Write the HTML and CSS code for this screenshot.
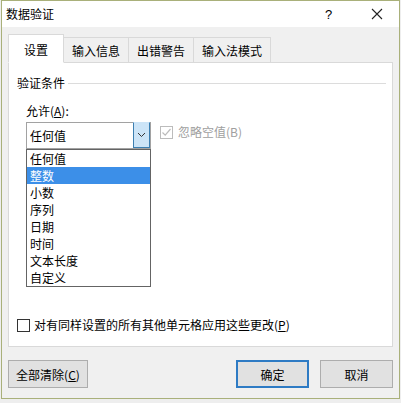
FILE: index.html
```html
<!DOCTYPE html>
<html lang="zh-CN">
<head>
<meta charset="utf-8">
<title>数据验证</title>
<link rel="stylesheet" href="styles.css">
</head>
<body>
<div class="dialog">
  <div class="titlebar">
    <span class="title">数据验证</span>
    <span class="help">?</span>
    <span class="close">
      <svg width="12" height="12" viewBox="0 0 12 12"><path d="M1 1L11 11M11 1L1 11" stroke="#222" stroke-width="1.1" fill="none"/></svg>
    </span>
  </div>
  <div class="body">
    <div class="tabs">
      <div class="tab active">设置</div>
      <div class="tab">输入信息</div>
      <div class="tab">出错警告</div>
      <div class="tab">输入法模式</div>
    </div>
    <div class="panel">
      <div class="group-title"><span>验证条件</span><span class="rule"></span></div>
      <div class="allow">
        <div class="allow-label">允许(<u>A</u>):</div>
        <div class="allow-row">
          <div class="combo">
            <span class="combo-value">任何值</span>
            <span class="combo-btn">
              <svg width="9" height="6" viewBox="0 0 9 6"><path d="M1 1L4.5 4.5L8 1" stroke="#333" stroke-width="1" fill="none"/></svg>
            </span>
            <ul class="dropdown">
              <li>任何值</li>
              <li class="selected">整数</li>
              <li>小数</li>
              <li>序列</li>
              <li>日期</li>
              <li>时间</li>
              <li>文本长度</li>
              <li>自定义</li>
            </ul>
          </div>
          <div class="check disabled">
            <span class="box">
              <svg width="11" height="11" viewBox="0 0 11 11"><path d="M1.5 5.5L4.2 8.2L9.5 2" stroke="#bcbcbc" stroke-width="1.2" fill="none"/></svg>
            </span>
            <span class="check-label">忽略空值(B)</span>
          </div>
        </div>
      </div>
      <div class="check apply">
        <span class="box"></span>
        <span class="check-label">对有同样设置的所有其他单元格应用这些更改(<u>P</u>)</span>
      </div>
    </div>
    <div class="buttons">
      <button class="btn clear">全部清除(<u>C</u>)</button>
      <button class="btn ok">确定</button>
      <button class="btn cancel">取消</button>
    </div>
  </div>
</div>
</body>
</html>
```

FILE: styles.css
```css
html, body {
  margin: 0;
  padding: 0;
  background: #eeeeee;
}
body {
  width: 401px;
  height: 403px;
  overflow: hidden;
  font-family: "Noto Sans CJK SC", "Microsoft YaHei", sans-serif;
  font-size: 12px;
  color: #000;
}
.dialog {
  width: 397px;
  height: 397px;
  border: 1px solid #a9b07a;
  margin-left: 1px;
  background: #f0f0f0;
  display: flex;
  flex-direction: column;
}
.titlebar {
  height: 26px;
  background: #fff;
  display: flex;
  align-items: center;
  padding-left: 4px;
}
.title {
  flex: 1;
  font-size: 12px;
  line-height: 16px;
  padding-bottom: 1px;
}
.help {
  font-family: "Liberation Sans", sans-serif;
  font-size: 13px;
  width: 12px;
  margin-right: 34px;
}
.close {
  display: flex;
  width: 12px;
  height: 12px;
  margin-right: 16px;
}
.body {
  flex: 1;
  padding: 8px 6px 0 6px;
  display: flex;
  flex-direction: column;
}
.tabs {
  display: flex;
  align-items: flex-end;
  height: 28px;
  position: relative;
  z-index: 1;
  margin-bottom: -1px;
}
.tab {
  height: 24px;
  line-height: 24px;
  padding: 0 8px;
  border: 1px solid #d9d9d9;
  border-bottom: 1px solid #d9d9d9;
  border-left: none;
  background: #f0f0f0;
  box-sizing: border-box;
  height: 26px;
  line-height: 25px;
}
.tab.active {
  height: 29px;
  line-height: 30px;
  padding: 0 15px;
  background: #fff;
  border-left: 1px solid #d9d9d9;
  border-bottom: 1px solid #fff;
}
.panel {
  height: 283px;
  background: #fff;
  border: 1px solid #d9d9d9;
  padding: 12px 6px 13px 8px;
  box-sizing: border-box;
  height: 285px;
  display: flex;
  flex-direction: column;
}
.group-title {
  display: flex;
  align-items: center;
  height: 16px;
  line-height: 16px;
}
.group-title .rule {
  flex: 1;
  height: 1px;
  background: #dcdcdc;
  margin-left: 3px;
}
.allow {
  margin-left: 9px;
  margin-top: 12px;
}
.allow-label {
  height: 16px;
  line-height: 16px;
}
.allow-row {
  margin-top: 3px;
  display: flex;
  align-items: flex-start;
}
.combo {
  position: relative;
  width: 125px;
  height: 27px;
  box-sizing: border-box;
  border: 1px solid #a2a2a2;
  display: flex;
  align-items: center;
  padding-left: 3px;
}
.combo-value {
  flex: 1;
  line-height: 16px;
}
.combo-btn {
  width: 17px;
  height: 26px;
  box-sizing: border-box;
  border: 1px solid #3c7fb1;
  border-top-color: #cce4f7;
  background: #cce4f7;
  display: flex;
  align-items: center;
  justify-content: center;
  margin-right: 0;
  align-self: flex-end;
}
.dropdown {
  position: absolute;
  left: -1px;
  top: 26px;
  width: 125px;
  box-sizing: border-box;
  margin: 0;
  padding: 0;
  list-style: none;
  border: 1px solid #646464;
  background: #fff;
}
.dropdown li {
  height: 17px;
  line-height: 17px;
  padding-left: 3px;
}
.dropdown li.selected {
  background: #3c8fe8;
  color: #fff;
}
.check {
  display: flex;
  align-items: center;
}
.check .box {
  width: 13px;
  height: 13px;
  box-sizing: border-box;
  border: 1px solid #333;
  background: #fff;
  display: flex;
  align-items: center;
  justify-content: center;
}
.check-label {
  margin-left: 5px;
  line-height: 16px;
}
.check.disabled {
  margin-left: 9px;
  margin-top: 2px;
  height: 16px;
}
.check.disabled .box {
  border-color: #bcbcbc;
}
.check.disabled .check-label {
  color: #a0a0a0;
}
.apply {
  margin-top: auto;
  height: 16px;
}
.apply .check-label {
  margin-left: 4px;
}
.buttons {
  display: flex;
  margin-top: 13px;
}
.btn {
  height: 28px;
  box-sizing: border-box;
  background: #e1e1e1;
  border: 1px solid #adadad;
  font-family: inherit;
  font-size: 12px;
  color: #000;
  padding: 0;
}
.btn.clear {
  width: 80px;
}
.btn.ok {
  width: 73px;
  margin-left: auto;
  border: 2px solid #2e7bc4;
}
.btn.cancel {
  width: 73px;
  margin-left: 11px;
}
```
